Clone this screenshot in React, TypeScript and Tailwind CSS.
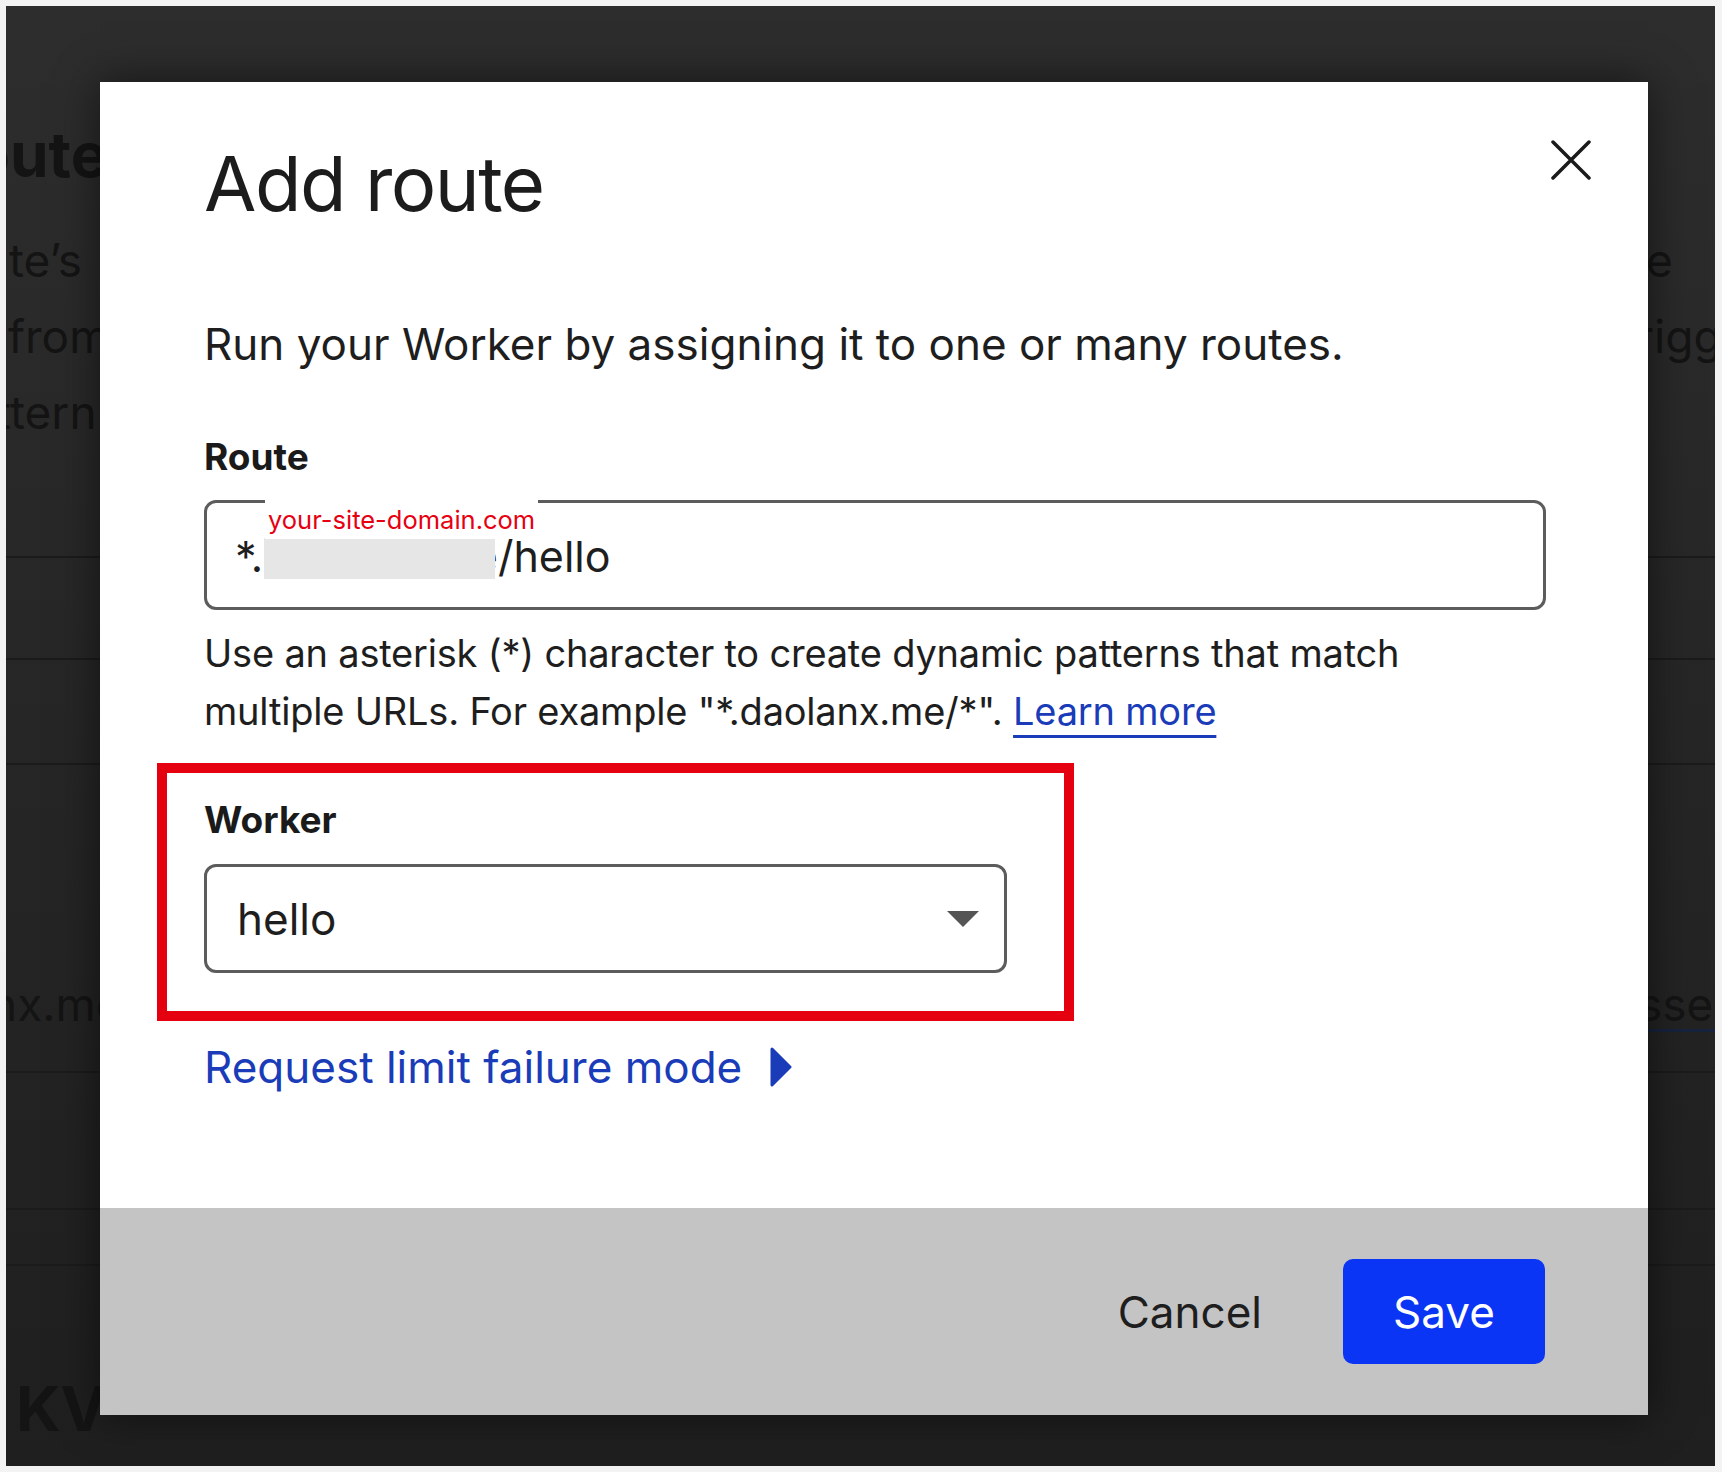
import React from "react";

function BgRow({ h, left, right, leftCls = "", rightCls = "", border = false }: { h: string; left?: React.ReactNode; right?: React.ReactNode; leftCls?: string; rightCls?: string; border?: boolean }) {
  return (
    <div className={`${h} flex justify-between items-start ${border ? "border-b-2 border-[#1b1b1b]" : ""}`}>
      <div className={`w-[94px] overflow-hidden whitespace-nowrap ${leftCls}`}>{left}</div>
      <div className={`w-[67px] overflow-hidden whitespace-nowrap ${rightCls}`}>{right}</div>
    </div>
  );
}

export default function App() {
  return (
    <div className="w-[1722px] h-[1472px] bg-[#f3f3f3] pt-[6px] pb-[6px] pl-[6px] pr-[7px] [font-family:Inter,'Noto_Sans',sans-serif]">
      <div className="relative w-full h-full overflow-hidden bg-linear-to-b from-[#2d2d2d] to-[#1f1f1f]">
        {/* background page (dimmed) */}
        <div className="flex flex-col text-[#141414]">
          <div className="h-[118px]" />
          <BgRow h="h-[62px]" leftCls="text-[62px] leading-[62px] font-bold" left={<span className="inline-block -ml-[34px]">oute</span>} />
          <div className="h-[36px]" />
          <BgRow h="h-[76px]" leftCls="text-[46px] leading-[76px]" rightCls="text-[46px] leading-[76px]" left={<span className="inline-block ml-[3px]">te’s</span>} right={<span className="inline-block -ml-[2px]">e</span>} />
          <BgRow h="h-[76px]" leftCls="text-[46px] leading-[76px]" rightCls="text-[46px] leading-[76px]" left={<span className="inline-block ml-[2px]">from</span>} right={<span className="inline-block -ml-[12px]">rigger</span>} />
          <BgRow h="h-[76px]" leftCls="text-[46px] leading-[76px]" left={<span className="inline-block -ml-[10px]">ttern</span>} />
          <BgRow h="h-[108px]" border />
          <BgRow h="h-[102px]" border />
          <BgRow h="h-[105px]" border />
          <div className="h-[201px]" />
          <BgRow h="h-[76px]" leftCls="text-[46px] leading-[76px]" rightCls="text-[46px] leading-[76px]" left={<span className="inline-block -ml-[16px]">nx.me</span>} right={<span className="inline-block -ml-[10px] underline decoration-[3px] underline-offset-[8px] decoration-[#17223d]">sses</span>} />
          <BgRow h="h-[31px]" border />
          <BgRow h="h-[137px]" border />
          <BgRow h="h-[56px]" border />
          <div className="h-[112px]" />
          <BgRow h="h-[62px]" leftCls="text-[62px] leading-[62px] font-bold" left={<span className="inline-block ml-[10px]">KV</span>} />
        </div>

        {/* modal */}
        <div className="absolute left-[94px] top-[76px] w-[1548px] h-[1333px] bg-white flex flex-col shadow-[0_0_40px_rgba(0,0,0,0.55)]">
          <button className="absolute right-[57px] top-[58px] w-[40px] h-[40px]">
            <svg width="40" height="40" viewBox="0 0 40 40">
              <path d="M2 2L38 38M38 2L2 38" stroke="#1a1a1a" strokeWidth="3.5" strokeLinecap="round" />
            </svg>
          </button>

          <div className="pl-[104px] pt-[63px] flex flex-col text-[#1e1e1e]">
            <h1 className="text-[76px] leading-[76px] tracking-[-1.5px] font-normal text-[#1c1c1c]">Add route</h1>
            <p className="mt-[95px] text-[44px] leading-[56px] whitespace-nowrap">
              Run your Worker by assigning it to one or many routes.
            </p>
            <div className="mt-[63px] text-[37px] leading-[44px] font-bold text-[#1a1a1a]">Route</div>
            <div className="relative mt-[21px] w-[1342px] h-[110px] border-[3px] border-[#5c5c5c] rounded-[12px] flex items-center pl-[28px] pt-[2px] text-[43px] leading-[44px] text-[#1e1e1e]">
              <span className="whitespace-nowrap">
                *.<span className="relative">daolanx.me<span className="absolute left-[1px] right-[3px] top-[8px] bottom-[3px] bg-[#e6e6e6] blur-[0.5px]" /></span>/hello
              </span>
              <span className="absolute left-[58px] top-[-8px] bg-white px-[3px] pt-[12px] pb-[6px] text-[25.5px] leading-[26px] text-[#e60012] whitespace-nowrap">
                your-site-domain.com
              </span>
            </div>
            <p className="mt-[14px] text-[38px] leading-[58px] tracking-[-0.2px] whitespace-nowrap">
              Use an asterisk (*) character to create dynamic patterns that match
              <br />
              multiple URLs. For example "*.daolanx.me/*".{" "}
              <a className="text-[#1a3cb8] underline decoration-[3px] underline-offset-[10px]">Learn more</a>
            </p>

            <div className="mt-[23px] -ml-[47px] w-[917px] h-[258px] border-[10px] border-[#e5000f] pl-[37px] pt-[25px] flex flex-col">
              <div className="text-[37px] leading-[44px] font-bold text-[#1a1a1a]">Worker</div>
              <div className="mt-[22px] w-[803px] h-[109px] border-[3px] border-[#5c5c5c] rounded-[12px] flex items-center justify-between pl-[30px] pr-[25px] text-[44px] leading-[44px]">
                <span>hello</span>
                <svg width="32" height="16" viewBox="0 0 32 16">
                  <path d="M0 0H32L16 16Z" fill="#555555" />
                </svg>
              </div>
            </div>

            <div className="mt-[19px] flex items-center gap-[28px] text-[44px] leading-[54px] text-[#1a3cb8]">
              <span>Request limit failure mode</span>
              <svg width="22" height="40" viewBox="0 0 22 40">
                <path d="M2 2L20 20L2 38Z" fill="#1a3cb8" stroke="#1a3cb8" strokeWidth="3" strokeLinejoin="round" />
              </svg>
            </div>
          </div>

          <div className="mt-auto h-[207px] bg-[#c4c4c4] flex items-center justify-end pr-[103px]">
            <span className="mr-[81px] text-[44px] leading-[54px] text-[#1e1e1e]">Cancel</span>
            <button className="w-[202px] h-[105px] rounded-[10px] bg-[#0b35f5] text-white text-[44px] leading-[54px]">Save</button>
          </div>
        </div>
      </div>
    </div>
  );
}
